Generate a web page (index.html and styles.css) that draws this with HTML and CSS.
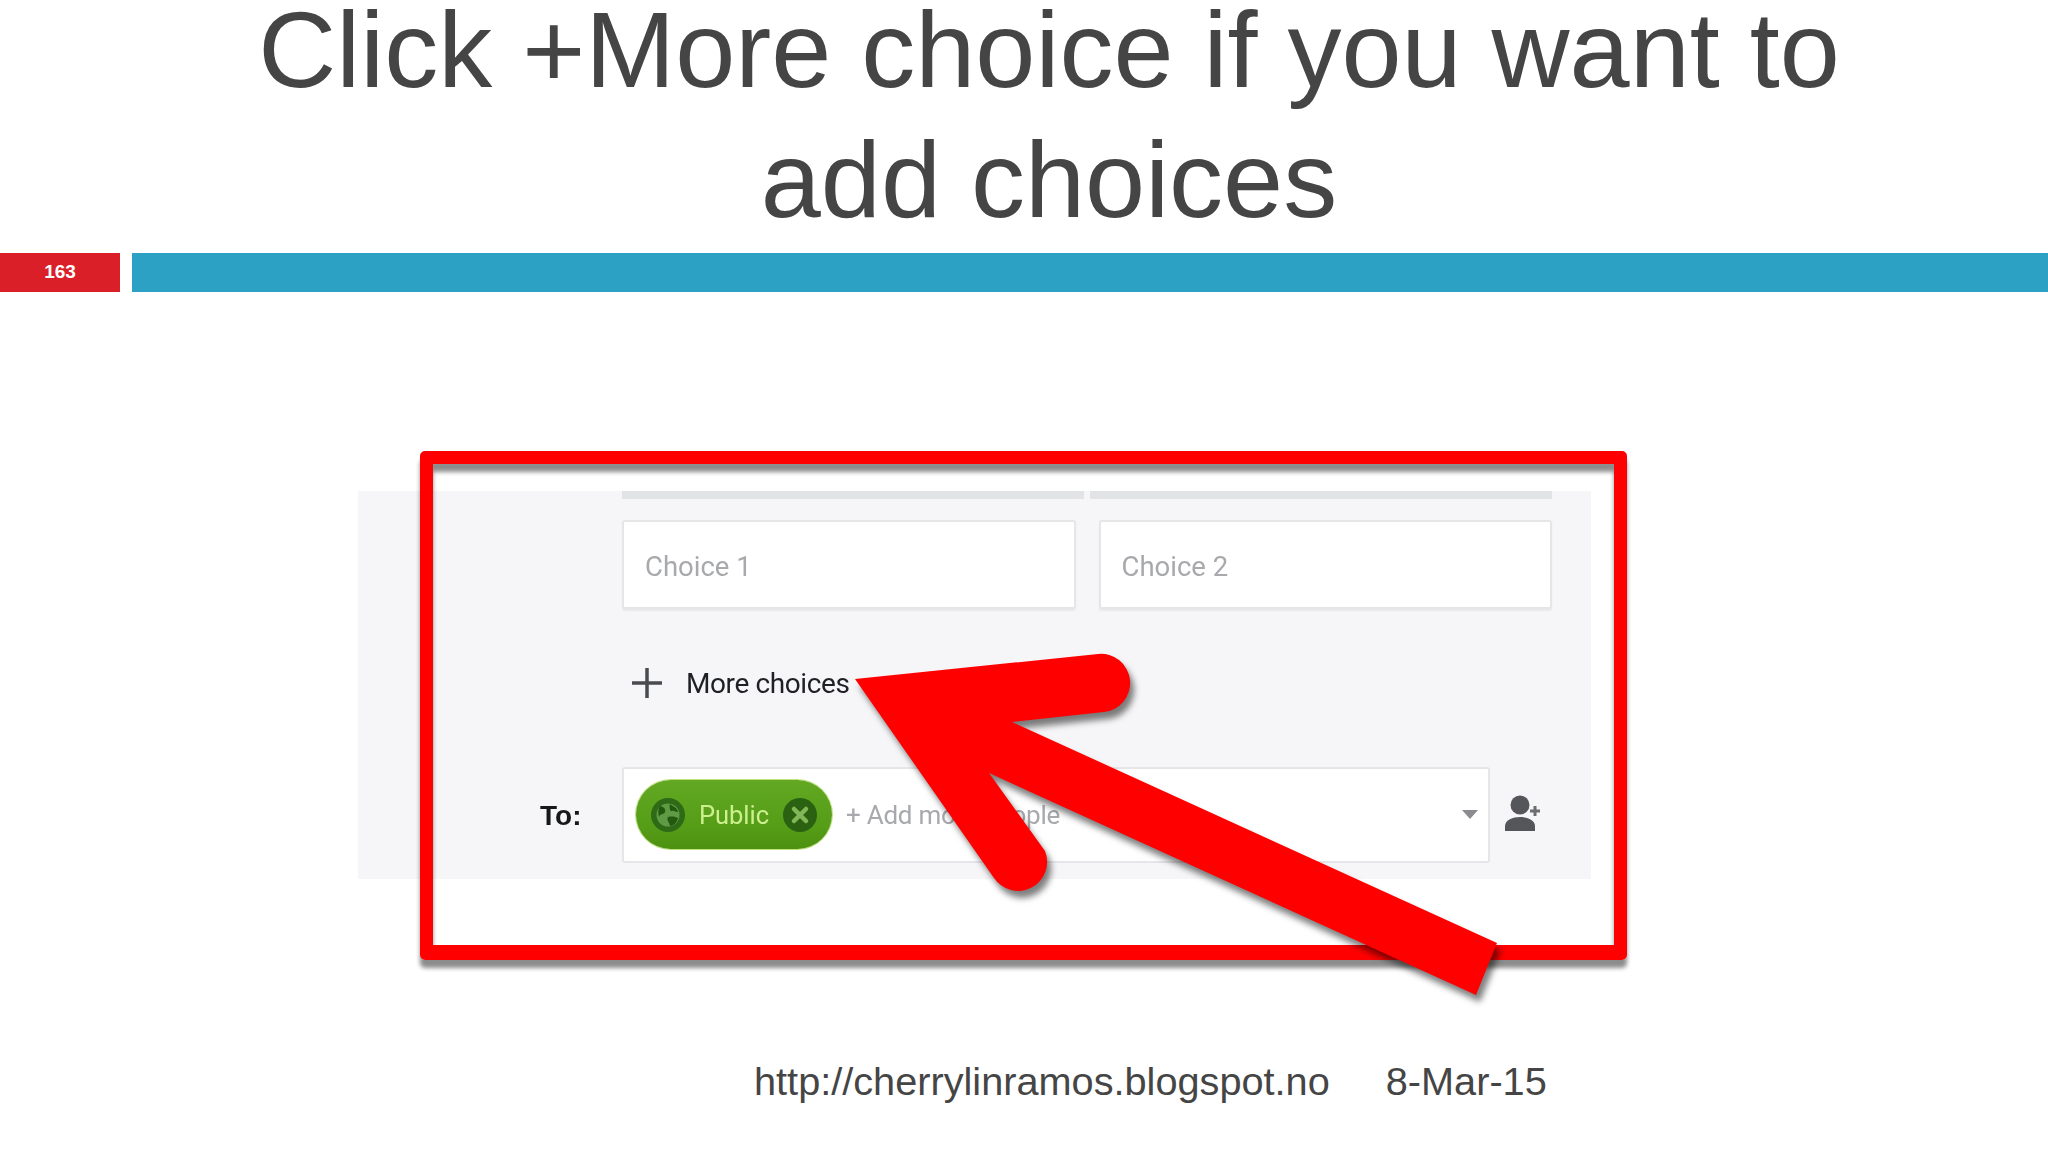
FILE: index.html
```html
<!DOCTYPE html>
<html lang="en">
<head>
<meta charset="utf-8">
<title>Click +More choice</title>
<link rel="stylesheet" href="styles.css">
</head>
<body>
<main class="slide">
  <header class="head"><h1 class="title">Click +More choice if you want to<br>add choices</h1></header>
  <div class="bars"><div class="num">163</div><div class="band"></div></div>
  <section class="panel">
    <div class="rule"><span></span><span></span></div>
    <div class="choices">
      <div class="choice">Choice 1</div>
      <div class="choice">Choice 2</div>
    </div>
    <div class="more">
      <svg class="plus" viewBox="0 0 32 32"><path d="M16 1V31M1 16H31"/></svg>
      <span>More choices</span>
    </div>
    <div class="to">
      <span class="to-label">To:</span>
      <div class="field">
        <div class="pill">
          <svg class="chip" viewBox="0 0 34 34"><circle cx="17" cy="17" r="17" fill="#2f6b17"/><circle cx="17" cy="17" r="11.5" fill="#5f9a44"/><path d="M9 8c4 1 6 3 5 6s-5 1-6 5c-1-4-1-8 1-11zM19 6c3 3 7 3 8 8-3 0-4-2-6-1s-3-4-2-7zM17 19c4-1 8 0 10 1-1 5-5 8-8 8 0-3-4-6-2-9z" fill="#23580f"/></svg>
          <span class="pill-text">Public</span>
          <svg class="chip" viewBox="0 0 34 34"><circle cx="17" cy="17" r="17" fill="#2a6212"/><path d="M11 11L23 23M23 11L11 23" stroke="#83b657" stroke-width="4.5" stroke-linecap="round"/></svg>
        </div>
        <span class="add">+ Add more people</span>
        <svg class="caret" viewBox="0 0 16 9"><path d="M0 0H16L8 9Z"/></svg>
      </div>
      <svg class="person" viewBox="0 0 36 36"><circle cx="15" cy="10" r="9.5"/><path d="M0 36V31C0 25 8 22 15 22S30 25 30 31V36Z"/><path d="M25 16H35M30 11V21" class="person-plus"/></svg>
    </div>
  </section>
  <footer class="foot"><span>http://cherrylinramos.blogspot.no</span><span>8-Mar-15</span></footer>
  <div class="frame"></div>
  <svg class="arrow" viewBox="0 0 2048 1152"><path d="M855 679L1098 654A29 29 0 0 1 1104 712L1012 722L1497 943L1476 995L989 773L1045 851A29 29 0 0 1 994 878Z"/></svg>
</main>
</body>
</html>
```
FILE: styles.css
```css
* { box-sizing: border-box; }
html, body { margin: 0; background: #fff; }
.slide { position: relative; width: 2048px; height: 1152px; overflow: hidden; font-family: "Liberation Sans", Arial, sans-serif; color: #454545; }
.head { height: 253px; display: flex; align-items: flex-end; justify-content: center; padding: 0 0 8px 50px; }
.title { margin: 0; flex: none; font-size: 108px; line-height: 130px; font-weight: 400; text-align: center; white-space: nowrap; }
.bars { display: flex; gap: 12px; height: 39px; }
.num { width: 120px; padding-bottom: 2px; background: #da1f28; color: #fff; font-size: 19px; font-weight: 700; display: flex; align-items: center; justify-content: center; }
.band { flex: 1; background: #2ca1c3; }
.panel { width: 1233px; height: 388px; margin: 199px 0 0 358px; padding-left: 264px; background: #f6f6f8; font-family: Roboto, "Liberation Sans", sans-serif; filter: blur(.7px); }
.rule { display: flex; gap: 6px; width: 930px; height: 8px; }
.rule span { flex: 1; background: #e2e3e5; }
.choices { display: flex; gap: 23px; margin: 21px 0 0 0; width: 930px; }
.choice { flex: 1; height: 89px; background: #fff; border: 2px solid #e6e6e8; border-radius: 3px; box-shadow: 0 2px 2px rgba(0,0,0,.06); display: flex; align-items: center; padding: 3px 0 0 21px; font-size: 27.5px; color: #a8a9ac; }
.more { display: flex; align-items: center; gap: 23px; height: 40px; margin: 54px 0 0 9px; font-size: 28px; letter-spacing: -.4px; color: #1f2023; }
.plus { width: 32px; height: 32px; fill: none; stroke: #4a4b4e; stroke-width: 3.5; }
.to { position: relative; display: flex; align-items: center; height: 95px; margin-top: 64px; }
.to-label { position: absolute; left: -82px; top: 33px; font-family: "Liberation Sans", sans-serif; font-size: 28px; font-weight: 700; color: #17181a; }
.field { width: 868px; height: 96px; margin-left: 0; padding: 0 12px; display: flex; align-items: center; background: #fff; border: 2px solid #e6e6e8; border-radius: 3px; }
.pill { width: 196px; height: 69px; flex: none; display: flex; align-items: center; justify-content: space-between; padding: 0 15px; border-radius: 35px; background: linear-gradient(#62a823, #559c17 70%, #4c9110); box-shadow: 0 0 0 1px #bfe27d; }
.chip { width: 34px; height: 34px; }
.pill-text { font-size: 25.5px; color: #cdf08f; }
.add { margin-left: 14px; font-size: 26px; letter-spacing: -.25px; color: #a8a9ac; }
.caret { width: 16px; height: 9px; margin-left: auto; margin-right: -2px; fill: #8b8c8f; }
.person { width: 36px; height: 36px; margin: -4px 0 0 15px; fill: #55565a; }
.person-plus { fill: none; stroke: #6c6d71; stroke-width: 3; }
.foot { display: flex; gap: 56px; margin-top: 179px; padding-left: 754px; font-size: 39.7px; line-height: 46px; }
.frame { position: absolute; left: 420px; top: 451px; width: 1207px; height: 509px; border: 13px solid #f00; border-bottom-width: 15px; border-radius: 5px; box-shadow: 0 8px 4px rgba(0,0,0,.45), inset 0 8px 4px rgba(0,0,0,.45); }
.arrow { position: absolute; left: 0; top: 0; width: 2048px; height: 1152px; fill: #f00; filter: drop-shadow(4px 7px 3px rgba(0,0,0,.5)); }
```
